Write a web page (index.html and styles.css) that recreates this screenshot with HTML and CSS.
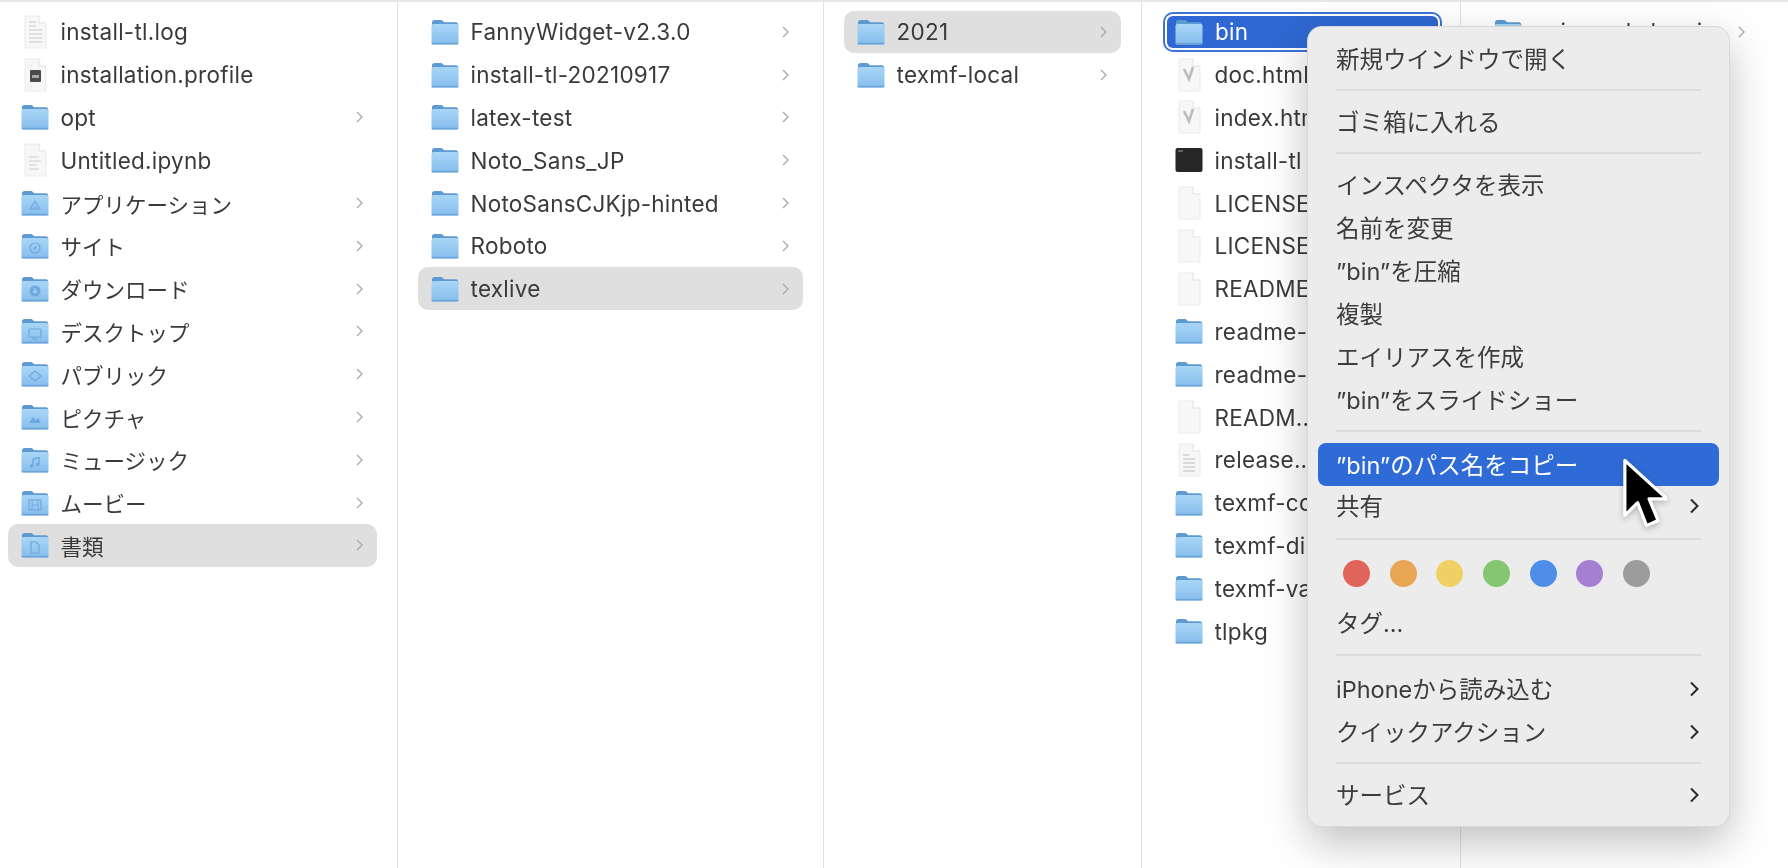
FILE: index.html
```html
<!DOCTYPE html>
<html lang="ja">
<head>
    <meta charset="UTF-8">
    <title>Finder</title>
    <link rel="stylesheet" href="styles.css">
</head>
<body>
    <svg class="defs" width="0" height="0">
        <defs>
            <linearGradient id="folder-body" x1="0" y1="0" x2="0" y2="1">
                <stop offset="0" stop-color="#a9d6f7"/>
                <stop offset="1" stop-color="#85bdec"/>
            </linearGradient>
            <symbol id="folder" viewBox="0 0 28 26">
                <path d="M1 3.5C1 2 2 1 3.5 1h6.200c1 0 1.600.4 2.200 1l1.200 1.200H25c1.300 0 2.200 1 2.200 2.300V9H1z" fill="#5d9ad2"/>
                <rect x="0.5" y="5" width="27" height="20.5" rx="2.2" fill="url(#folder-body)"/>
                <rect x="0.5" y="23.8" width="27" height="1.7" rx="0.8" fill="#6ea6da"/>
            </symbol>
            <symbol id="chev" viewBox="0 0 7 12">
                <path d="M1 1l5 5-5 5" fill="none" stroke="currentColor" stroke-width="1.3"/>
            </symbol>
            <symbol id="chev-bold" viewBox="0 0 10 16">
                <path d="M2 1.500l6.500 6.500-6.500 6.500" fill="none" stroke="currentColor" stroke-width="2"/>
            </symbol>
            <symbol id="doc" viewBox="0 0 28 34">
                <path d="M4 1h14l7 7v25H4z" fill="#f7f7f7" stroke="#ebebeb"/>
                <path d="M18 1v7h7" fill="#fff" stroke="#e2e2e2"/>
            </symbol>
        </defs>
    </svg>

    <div class="browser">
        <section class="col col-first">
            <div class="row"><svg class="icon doc-icon"><use href="#doc"/><path d="M8 7h7M8 11h7M8 15h13M8 19h13M8 23h13M8 27h13" stroke="#d8d8d8" stroke-width="1.600"/></svg><span class="name">install-tl.log</span></div>
            <div class="row"><svg class="icon doc-icon"><use href="#doc"/><rect x="9" y="12" width="11" height="12" rx="1" fill="#4a4a4a"/><rect x="11" y="17" width="7" height="3" fill="#a8a8a8"/></svg><span class="name">installation.profile</span></div>
            <div class="row"><svg class="icon"><use href="#folder"/></svg><span class="name">opt</span><svg class="chev"><use href="#chev"/></svg></div>
            <div class="row"><svg class="icon doc-icon"><use href="#doc"/><path d="M8 14h10M8 18h12M8 22h8M8 26h10" stroke="#cfcfcf"/></svg><span class="name">Untitled.ipynb</span></div>
            <div class="row"><svg class="icon"><use href="#folder"/><path d="M14 11l5 8H9zM12 17h4" fill="none" stroke="#6fa8de" stroke-width="1.2"/></svg><span class="name ja">アプリケーション</span><svg class="chev"><use href="#chev"/></svg></div>
            <div class="row"><svg class="icon"><use href="#folder"/><circle cx="14" cy="15" r="5" fill="none" stroke="#6fa8de" stroke-width="1.2"/><path d="M16 13l-3 1-1 3 3-1z" fill="#6fa8de"/></svg><span class="name ja">サイト</span><svg class="chev"><use href="#chev"/></svg></div>
            <div class="row"><svg class="icon"><use href="#folder"/><circle cx="14" cy="15" r="5.5" fill="#6fa8de"/><path d="M14 12v5M12 15l2 2 2-2" fill="none" stroke="#a9d6f7" stroke-width="1.1"/></svg><span class="name ja">ダウンロード</span><svg class="chev"><use href="#chev"/></svg></div>
            <div class="row"><svg class="icon"><use href="#folder"/><rect x="8" y="11" width="12" height="8" rx="1" fill="none" stroke="#6fa8de" stroke-width="1.2"/><path d="M11 21h6" stroke="#6fa8de" stroke-width="1.2"/></svg><span class="name ja">デスクトップ</span><svg class="chev"><use href="#chev"/></svg></div>
            <div class="row"><svg class="icon"><use href="#folder"/><path d="M14 10l6 5-6 5-6-5z" fill="none" stroke="#6fa8de" stroke-width="1.2"/></svg><span class="name ja">パブリック</span><svg class="chev"><use href="#chev"/></svg></div>
            <div class="row"><svg class="icon"><use href="#folder"/><path d="M8 19l4-6 3 3 2-2 3 5z" fill="#6fa8de"/></svg><span class="name ja">ピクチャ</span><svg class="chev"><use href="#chev"/></svg></div>
            <div class="row"><svg class="icon"><use href="#folder"/><path d="M12 19v-7l6-1.500v7" fill="none" stroke="#6fa8de" stroke-width="1.3"/><circle cx="10.500" cy="19" r="1.800" fill="#6fa8de"/><circle cx="16.500" cy="17.500" r="1.800" fill="#6fa8de"/></svg><span class="name ja">ミュージック</span><svg class="chev"><use href="#chev"/></svg></div>
            <div class="row"><svg class="icon"><use href="#folder"/><rect x="8" y="10" width="12" height="10" fill="none" stroke="#6fa8de" stroke-width="1.2"/><path d="M11 10v10M17 10v10M11 15h6" stroke="#6fa8de" stroke-width="1"/></svg><span class="name ja">ムービー</span><svg class="chev"><use href="#chev"/></svg></div>
            <div class="row row-open"><svg class="icon"><use href="#folder"/><path d="M10 10h5l3 3v8h-8z" fill="none" stroke="#6fa8de" stroke-width="1.2"/></svg><span class="name ja">書類</span><svg class="chev"><use href="#chev"/></svg></div>
        </section>

        <section class="col col-second">
            <div class="row"><svg class="icon"><use href="#folder"/></svg><span class="name">FannyWidget-v2.3.0</span><svg class="chev"><use href="#chev"/></svg></div>
            <div class="row"><svg class="icon"><use href="#folder"/></svg><span class="name">install-tl-20210917</span><svg class="chev"><use href="#chev"/></svg></div>
            <div class="row"><svg class="icon"><use href="#folder"/></svg><span class="name">latex-test</span><svg class="chev"><use href="#chev"/></svg></div>
            <div class="row"><svg class="icon"><use href="#folder"/></svg><span class="name">Noto_Sans_JP</span><svg class="chev"><use href="#chev"/></svg></div>
            <div class="row"><svg class="icon"><use href="#folder"/></svg><span class="name">NotoSansCJKjp-hinted</span><svg class="chev"><use href="#chev"/></svg></div>
            <div class="row"><svg class="icon"><use href="#folder"/></svg><span class="name">Roboto</span><svg class="chev"><use href="#chev"/></svg></div>
            <div class="row row-open"><svg class="icon"><use href="#folder"/></svg><span class="name">texlive</span><svg class="chev"><use href="#chev"/></svg></div>
        </section>

        <section class="col col-third">
            <div class="row row-open"><svg class="icon"><use href="#folder"/></svg><span class="name">2021</span><svg class="chev"><use href="#chev"/></svg></div>
            <div class="row"><svg class="icon"><use href="#folder"/></svg><span class="name">texmf-local</span><svg class="chev"><use href="#chev"/></svg></div>
        </section>

        <section class="col col-fourth">
            <div class="row row-selected"><svg class="icon"><use href="#folder"/></svg><span class="name">bin</span><svg class="chev"><use href="#chev"/></svg></div>
            <div class="row"><svg class="icon doc-icon"><use href="#doc"/><path d="M9 11l5 10 4-12" fill="none" stroke="#bcbcbc" stroke-width="2.600"/></svg><span class="name">doc.html</span></div>
            <div class="row"><svg class="icon doc-icon"><use href="#doc"/><path d="M9 11l5 10 4-12" fill="none" stroke="#bcbcbc" stroke-width="2.600"/></svg><span class="name">index.html</span></div>
            <div class="row"><svg class="icon exec-icon" viewBox="0 0 28 26"><rect x="0.500" y="1" width="27" height="24" rx="2" fill="#262626"/><path d="M3 4h5" stroke="#9a9a9a"/></svg><span class="name">install-tl</span></div>
            <div class="row"><svg class="icon doc-icon"><use href="#doc"/></svg><span class="name">LICENSE.CTAN</span></div>
            <div class="row"><svg class="icon doc-icon"><use href="#doc"/></svg><span class="name">LICENSE.TL</span></div>
            <div class="row"><svg class="icon doc-icon"><use href="#doc"/></svg><span class="name">README</span></div>
            <div class="row"><svg class="icon"><use href="#folder"/></svg><span class="name">readme-html.dir</span><svg class="chev"><use href="#chev"/></svg></div>
            <div class="row"><svg class="icon"><use href="#folder"/></svg><span class="name">readme-txt.dir</span><svg class="chev"><use href="#chev"/></svg></div>
            <div class="row"><svg class="icon doc-icon"><use href="#doc"/></svg><span class="name">READM...</span></div>
            <div class="row"><svg class="icon doc-icon"><use href="#doc"/><path d="M8 12h6M8 16h12M8 20h12M8 24h12M8 28h12" stroke="#cfcfcf" stroke-width="1.500"/></svg><span class="name">release...</span></div>
            <div class="row"><svg class="icon"><use href="#folder"/></svg><span class="name">texmf-config</span><svg class="chev"><use href="#chev"/></svg></div>
            <div class="row"><svg class="icon"><use href="#folder"/></svg><span class="name">texmf-dist</span><svg class="chev"><use href="#chev"/></svg></div>
            <div class="row"><svg class="icon"><use href="#folder"/></svg><span class="name">texmf-var</span><svg class="chev"><use href="#chev"/></svg></div>
            <div class="row"><svg class="icon"><use href="#folder"/></svg><span class="name">tlpkg</span><svg class="chev"><use href="#chev"/></svg></div>
        </section>

        <section class="col col-fifth">
            <div class="row"><svg class="icon"><use href="#folder"/></svg><span class="name">universal-darwin</span><svg class="chev"><use href="#chev"/></svg></div>
        </section>
    </div>

    <div class="menu">
        <div class="item">新規ウインドウで開く</div>
        <div class="sep"></div>
        <div class="item">ゴミ箱に入れる</div>
        <div class="sep"></div>
        <div class="item">インスペクタを表示</div>
        <div class="item">名前を変更</div>
        <div class="item">”bin”を圧縮</div>
        <div class="item">複製</div>
        <div class="item">エイリアスを作成</div>
        <div class="item">”bin”をスライドショー</div>
        <div class="sep sep-before-active"></div>
        <div class="item item-active">”bin”のパス名をコピー</div>
        <div class="item item-share">共有<svg class="sub"><use href="#chev-bold"/></svg></div>
        <div class="sep"></div>
        <div class="tags">
            <i class="dot dot-red"></i>
            <i class="dot dot-orange"></i>
            <i class="dot dot-yellow"></i>
            <i class="dot dot-green"></i>
            <i class="dot dot-blue"></i>
            <i class="dot dot-purple"></i>
            <i class="dot dot-gray"></i>
        </div>
        <div class="item">タグ...</div>
        <div class="sep sep-after-tags"></div>
        <div class="item">iPhoneから読み込む<svg class="sub"><use href="#chev-bold"/></svg></div>
        <div class="item">クイックアクション<svg class="sub"><use href="#chev-bold"/></svg></div>
        <div class="sep"></div>
        <div class="item">サービス<svg class="sub"><use href="#chev-bold"/></svg></div>
    </div>

    <!-- mouse pointer -->
    <svg class="pointer" viewBox="0 0 36 58">
        <path d="M3 2v43l10-10 7 18 9-4-7-17h14z" fill="#000" stroke="#fff" stroke-width="2.500" stroke-linejoin="round"/>
    </svg>
</body>
</html>
```

FILE: styles.css
```css
html, body {
    margin: 0;
    height: 100%;
    overflow: hidden;
    background: #fff;
}

body {
    font-family: Inter, "Noto Sans CJK JP", sans-serif;
    color: #3a3a3a;
    filter: blur(0.7px);
}

.defs {
    position: absolute;
}

/* Finder column view */
.browser {
    display: flex;
    height: 868px;
    box-sizing: border-box;
    border-top: 2px solid #e6e6e6;
}

.col {
    box-sizing: border-box;
    padding: 8.5px 20px 0;
    border-right: 1px solid #e2e2e2;
}

.col-first {
    width: 398px;
    padding-left: 8px;
}

.col-second {
    width: 426px;
}

.col-third {
    width: 318px;
}

.col-fourth {
    width: 319px;
}

.col-fifth {
    width: 327px;
    padding-right: 29px;
    border-right: 0;
}

.row {
    display: flex;
    align-items: center;
    height: 42.8px;
    padding: 0 14px 0 12.5px;
    border-radius: 10px;
    box-sizing: border-box;
    font-size: 22.5px;
    letter-spacing: 0.25px;
}

.icon {
    flex: none;
    width: 28px;
    height: 26px;
    margin-right: 12px;
}

.doc-icon {
    height: 34px;
}

.exec-icon {
    height: 26px;
}

.name {
    flex: 1;
    white-space: nowrap;
    overflow: hidden;
}

.ja {
    font-size: 21.5px;
    letter-spacing: 0;
}

.chev {
    flex: none;
    width: 7px;
    height: 12px;
    color: #a9a9a9;
}

.row-open {
    background: #dfdfdf;
}

/* focused row: blue fill, white gap, blue ring */
.row-selected {
    color: #fff;
    background: #2f68d2;
    box-shadow: 0 0 0 2px #fff, 0 0 0 4px #3a74d8;
    height: 31.8px;
    margin: 5.5px 2px 5.5px 5px;
    padding-left: 8px;
    padding-right: 9px;
    border-radius: 6px;
}

.row-selected .chev {
    color: #fff;
}

/* context menu sits over the columns */
.menu {
    position: absolute;
    left: 1308px;
    top: 27px;
    width: 421px;
    box-sizing: border-box;
    padding: 10px 10px;
    background: #ececec;
    border-radius: 14px;
    box-shadow: 0 0 0 1px #d8d8d8, 0 16px 44px rgba(0, 0, 0, 0.26);
}

.item {
    display: flex;
    align-items: center;
    justify-content: space-between;
    box-sizing: border-box;
    height: 43px;
    padding: 0 20px 2px 18px;
    border-radius: 8px;
    font-size: 23.5px;
    color: #3c3c3c;
}

.item-active {
    color: #fff;
    background: #2f6bd6;
}

.item-share {
    padding-bottom: 5px;
}

.sub {
    width: 10px;
    height: 16px;
    margin-top: 2px;
    color: #2a2a2a;
}

.sep {
    height: 2px;
    margin: 9px 18px;
    background: #dcdcdc;
}

.sep-before-active {
    margin-bottom: 11px;
}

.sep-after-tags {
    margin: 10px 18px 11px;
}

.tags {
    display: flex;
    gap: 19.7px;
    height: 52px;
    align-items: center;
    box-sizing: border-box;
    padding: 0 0 4px 25px;
}

.dot {
    width: 27px;
    height: 27px;
    border-radius: 50%;
}

.dot-red { background: #e0645a; }
.dot-orange { background: #e8a654; }
.dot-yellow { background: #efd163; }
.dot-green { background: #85c671; }
.dot-blue { background: #4f8ee8; }
.dot-purple { background: #a47fd2; }
.dot-gray { background: #9c9c9c; }

.pointer {
    position: absolute;
    left: 1621px;
    top: 458px;
    width: 46px;
    height: 74px;
    filter: drop-shadow(0 2px 3px rgba(0, 0, 0, 0.25));
}
```
